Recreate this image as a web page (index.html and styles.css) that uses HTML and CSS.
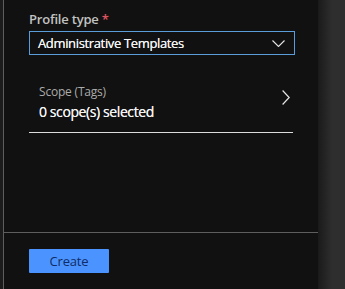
FILE: index.html
```html
<!DOCTYPE html>
<html>
<head>
<meta charset="utf-8">
<link rel="stylesheet" href="styles.css">
</head>
<body>
<div class="frame">
  <div class="strip"></div>
  <div class="panel">
    <div class="content">
      <div class="label">Profile type <span class="req">*</span></div>
      <div class="select">
        <span class="select-text">Administrative Templates</span>
        <svg class="chev-down" width="13" height="7" viewBox="0 0 13 7"><path d="M0.5 0.5 L6.5 6.5 L12.5 0.5" fill="none" stroke="#e6e6e6" stroke-width="1.1"/></svg>
      </div>
      <div class="scope">
        <div class="scope-text">
          <div class="scope-title">Scope (Tags)</div>
          <div class="scope-value">0 scope(s) selected</div>
        </div>
        <svg class="chev-right" width="8" height="15" viewBox="0 0 8 15"><path d="M0.6 0.5 L7.2 7.5 L0.6 14.5" fill="none" stroke="#e6e6e6" stroke-width="1.2"/></svg>
      </div>
    </div>
    <div class="footer">
      <button class="create">Create</button>
    </div>
  </div>
  <div class="shade"></div>
</div>
</body>
</html>
```
FILE: styles.css
```css
html, body {
  margin: 0;
  padding: 0;
  background: #2e2e2e;
  height: 289px;
  overflow: hidden;
  font-family: "Open Sans", "Liberation Sans", sans-serif;
}
.frame {
  display: flex;
  height: 289px;
}
.strip {
  width: 3px;
  background: #1c1c1c;
  flex: none;
}
.panel {
  width: 314px;
  flex: none;
  background: #111111;
  border-left: 1px solid #5e5e5e;
  display: flex;
  flex-direction: column;
}
.shade {
  width: 14px;
  flex: none;
  background: linear-gradient(to right, #1a1a1a, #2e2e2e);
}
.content {
  flex: 1;
  padding: 10px 0 0 25px;
}
.label {
  color: #c2c2c2;
  font-size: 13px;
  font-weight: 600;
  line-height: 18px;
  letter-spacing: -0.2px;
}
.req {
  color: #e05560;
}
.select {
  margin-top: 3px;
  height: 22px;
  border: 1px solid #5b9cdb;
  display: flex;
  align-items: center;
  justify-content: space-between;
  padding: 0 8px 0 8px;
  box-sizing: content-box;
  width: 248px;
}
.select-text {
  color: #f4f4f4;
  font-size: 13px;
  letter-spacing: -0.35px;
  text-shadow: 0 0 0.4px #f4f4f4;
}
.chev-down {
  margin-right: 1px;
}
.scope {
  margin-top: 27px;
  width: 264px;
  border-bottom: 1px solid #dcdcdc;
  display: flex;
  align-items: center;
  justify-content: space-between;
  padding-bottom: 10px;
}
.scope-text {
  padding-left: 10px;
}
.scope-title {
  color: #ababab;
  font-size: 12px;
  line-height: 18px;
  letter-spacing: -0.2px;
  margin-top: 1px;
}
.scope-value {
  color: #f4f4f4;
  font-size: 14px;
  line-height: 20px;
  margin-top: 1px;
  letter-spacing: -0.4px;
  text-shadow: 0 0 0.4px #f4f4f4;
}
.chev-right {
  margin-right: 3px;
  margin-top: -10px;
}
.footer {
  height: 40px;
  border-top: 1px solid #5e5e5e;
  padding: 16px 0 0 25px;
}
.create {
  width: 80px;
  height: 24px;
  background: #4b94ff;
  border: none;
  border-radius: 1px;
  color: #0f2c66;
  font-family: "Open Sans", "Liberation Sans", sans-serif;
  font-size: 13px;
  padding: 0;
  letter-spacing: -0.2px;
}
```
